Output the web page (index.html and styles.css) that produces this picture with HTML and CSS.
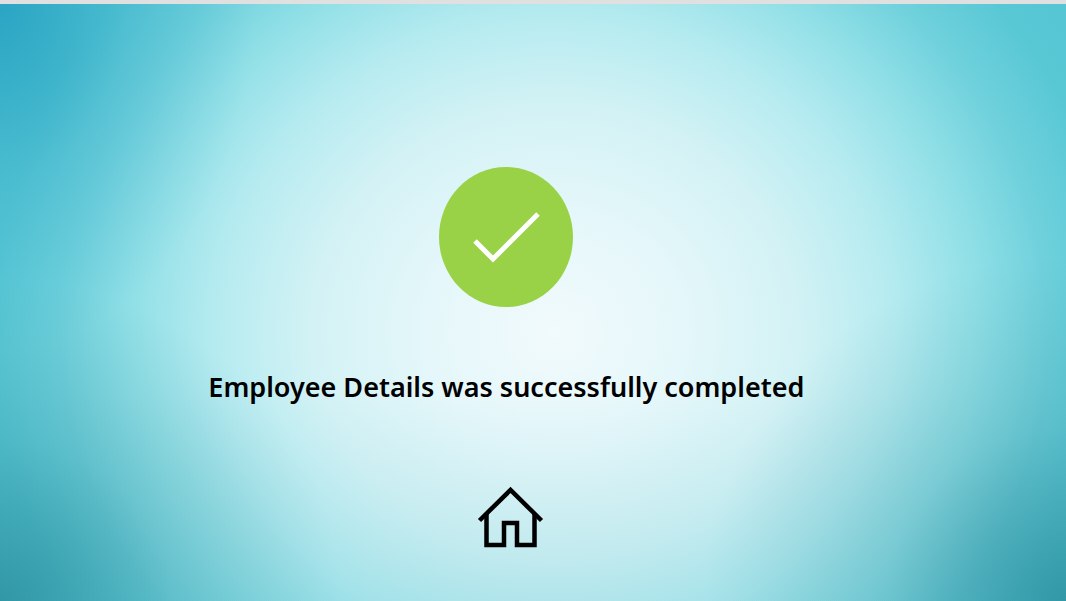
FILE: index.html
```html
<!DOCTYPE html>
<html lang="en">
<head>
<meta charset="utf-8">
<meta name="viewport" content="width=device-width, initial-scale=1">
<title>Employee Details</title>
<link rel="stylesheet" href="styles.css">
</head>
<body>
<main class="result">
  <svg class="result-badge" viewBox="0 0 134 140" aria-hidden="true">
    <ellipse cx="67" cy="70" rx="67" ry="70" fill="#99d247"/>
    <path d="M36 74 L54 92 L99 47" fill="none" stroke="#fff" stroke-width="5"/>
  </svg>
  <h1 class="result-title">Employee Details was successfully completed</h1>
  <a class="home-link" href="#" aria-label="Home">
    <svg class="home-icon" viewBox="0 0 72 64" aria-hidden="true">
      <path d="M5.500 35.500 L36.500 5 L67.500 35.500" fill="none" stroke="#000" stroke-width="4.500"/>
      <path d="M12.500 29 V60 H30 V38 H43 V60 H60.500 V29" fill="none" stroke="#000" stroke-width="4.500"/>
    </svg>
  </a>
</main>
</body>
</html>
```
FILE: styles.css
```css
* {
  box-sizing: border-box;
}

body {
  margin: 0;
  min-height: 100vh;
  display: flex;
  border-top: 4px solid #e0e0e0;
  font-family: "Noto Sans", "Open Sans", sans-serif;
}

.result {
  flex: 1;
  display: flex;
  flex-direction: column;
  align-items: center;
  padding: 163px 5% 48px 0;
  background:
    radial-gradient(ellipse 24% 58% at 0% 0%, rgba(14, 144, 186, 0.6), rgba(14, 144, 186, 0.2) 50%, rgba(14, 144, 186, 0)),
    radial-gradient(ellipse 32% 54% at 0% 100%, rgba(16, 108, 124, 0.5), rgba(16, 108, 124, 0.16) 50%, rgba(16, 108, 124, 0)),
    radial-gradient(ellipse 34% 58% at 100% 100%, rgba(16, 108, 124, 0.5), rgba(16, 108, 124, 0.16) 50%, rgba(16, 108, 124, 0)),
    linear-gradient(to top, rgba(70, 180, 195, 0.16), rgba(70, 180, 195, 0) 35%),
    radial-gradient(ellipse 54% 90% at 52% 55%, #f1fafc 0%, #e5f7fa 22%, #d3f2f5 42%, #b5ebf0 59%, #92e0e7 73%, #6fd1dc 86%, #59c8d5 98%, #54c4d3 112%);
}

.result-badge {
  width: 134px;
  height: 140px;
}

.result-title {
  margin: 62px 0 0;
  font-size: 27px;
  line-height: 36px;
  font-weight: 600;
  text-align: center;
  color: #000;
}

.home-link {
  margin: 80px 0 0 8px;
  display: block;
}

.home-icon {
  display: block;
  width: 72px;
  height: 64px;
}
```
